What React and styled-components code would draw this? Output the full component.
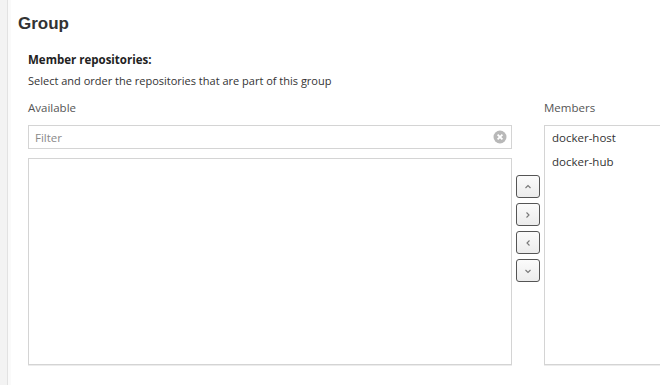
import styled, { createGlobalStyle } from "styled-components";

const GlobalStyle = createGlobalStyle`
  html, body {
    margin: 0;
    padding: 0;
    background: #f3f3f3;
  }
  body {
    font-family: "Open Sans", "Liberation Sans", sans-serif;
    color: #333;
  }
`;

const Page = styled.div`
  display: flex;
  height: 385px;
  overflow: hidden;
`;

const Gutter = styled.div`
  width: 7px;
  flex-shrink: 0;
  background: #f3f3f3;
  border-right: 1px solid #e2e2e2;
`;

const Panel = styled.div`
  flex: 1;
  background: #fff;
  padding: 14px 0 0 7px;
  border-left: 3px solid #fafafa;
`;

const Title = styled.h2`
  margin: 0 0 18px;
  font-family: "Liberation Sans", Arial, sans-serif;
  font-size: 17px;
  font-weight: 700;
  color: #333;
  line-height: 20px;
`;

const Section = styled.div`
  padding-left: 10px;
`;

const Label = styled.div`
  font-size: 11.5px;
  font-weight: 700;
  color: #222;
  line-height: 16px;
`;

const Help = styled.div`
  margin-top: 6px;
  font-size: 11px;
  color: #333;
  line-height: 14px;
`;

const Grid = styled.div`
  margin-top: 12px;
  display: grid;
  grid-template-columns: 484px 24px 140px;
  column-gap: 4px;
`;

const Column = styled.div`
  display: flex;
  flex-direction: column;
`;

const Caption = styled.div`
  font-size: 11.5px;
  color: #555;
  line-height: 16px;
  margin-bottom: 9px;
`;

const FilterBox = styled.div`
  position: relative;
  height: 24px;
  box-sizing: border-box;
  border: 1px solid #d4d4d4;
  display: flex;
  align-items: center;
  padding: 0 6px;
  margin-bottom: 9px;
`;

const FilterText = styled.span`
  font-size: 11.5px;
  color: #8a8a8a;
`;

const ClearIcon = styled.svg`
  position: absolute;
  right: 4px;
  top: 4px;
`;

const List = styled.div`
  box-sizing: border-box;
  border: 1px solid #d4d4d4;
  box-shadow: 0 1px 0 #ececec;
  height: ${(p) => p.h}px;
  padding: 0 7px;
`;

const Item = styled.div`
  font-size: 11.5px;
  color: #333;
  line-height: 24px;
`;

const Buttons = styled.div`
  display: flex;
  flex-direction: column;
  gap: 5px;
  padding-top: 75px;
`;

const MoveButton = styled.button`
  width: 24px;
  height: 23px;
  padding: 0;
  border: 1px solid #555;
  border-radius: 3px;
  background: linear-gradient(#fbfbfb, #ececec);
  display: flex;
  align-items: center;
  justify-content: center;
`;

const chevrons = {
  up: "M1.5 5 L4 2.5 L6.5 5",
  right: "M2.5 1.5 L5 4 L2.5 6.5",
  left: "M5.5 1.5 L3 4 L5.5 6.5",
  down: "M1.5 3 L4 5.5 L6.5 3",
};

function Chevron({ dir }) {
  return (
    <svg width="8" height="8" viewBox="0 0 8 8">
      <path d={chevrons[dir]} fill="none" stroke="#777" strokeWidth="1.1" />
    </svg>
  );
}

export default function App() {
  return (
    <Page>
      <GlobalStyle />
      <Gutter />
      <Panel>
        <Title>Group</Title>
        <Section>
          <Label>Member repositories:</Label>
          <Help>Select and order the repositories that are part of this group</Help>
          <Grid>
            <Column>
              <Caption>Available</Caption>
              <FilterBox>
                <FilterText>Filter</FilterText>
                <ClearIcon width="14" height="14" viewBox="0 0 14 14">
                  <circle cx="7" cy="7" r="6.5" fill="#b8b8b8" />
                  <path d="M4.6 4.6 L9.4 9.4 M9.4 4.6 L4.6 9.4" stroke="#fff" strokeWidth="1.8" />
                </ClearIcon>
              </FilterBox>
              <List h={207} />
            </Column>
            <Buttons>
              <MoveButton><Chevron dir="up" /></MoveButton>
              <MoveButton><Chevron dir="right" /></MoveButton>
              <MoveButton><Chevron dir="left" /></MoveButton>
              <MoveButton><Chevron dir="down" /></MoveButton>
            </Buttons>
            <Column>
              <Caption>Members</Caption>
              <List h={240}>
                <Item>docker-host</Item>
                <Item>docker-hub</Item>
              </List>
            </Column>
          </Grid>
        </Section>
      </Panel>
    </Page>
  );
}
